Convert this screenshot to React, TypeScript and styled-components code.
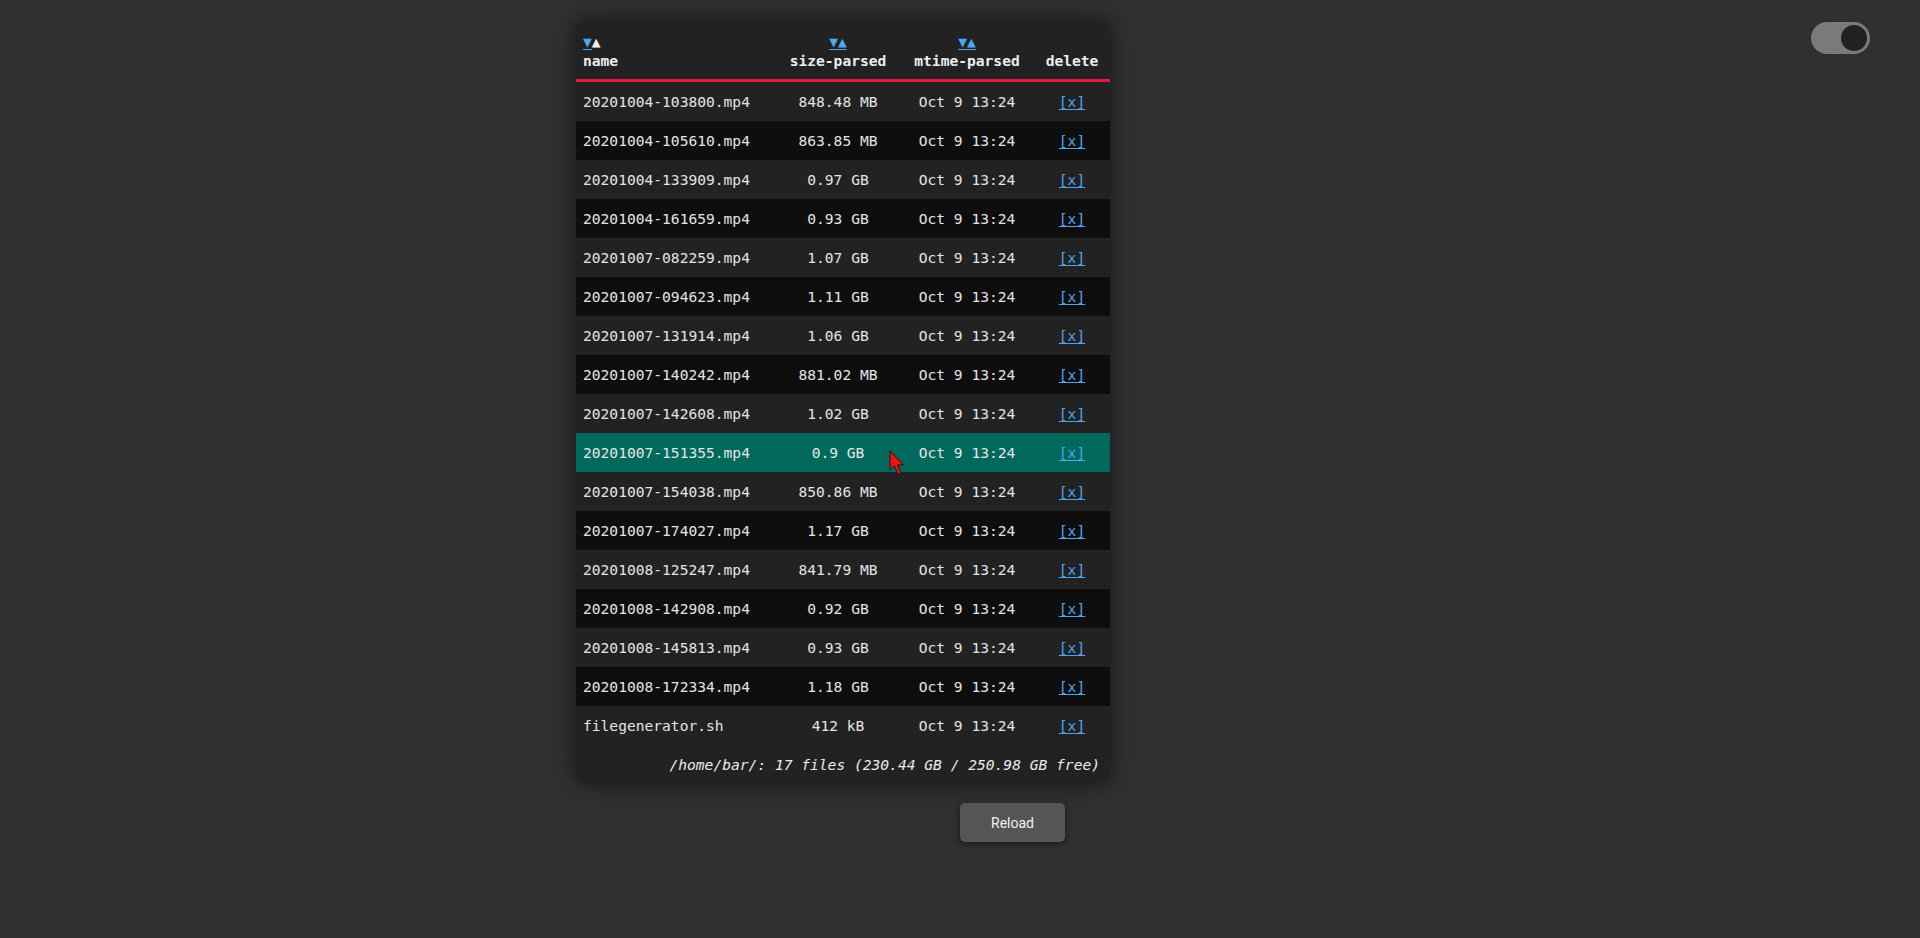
import React from "react";
import styled, { createGlobalStyle } from "styled-components";

const Global = createGlobalStyle`
  html, body { margin: 0; padding: 0; background: #303030; }
  body { font-family: "DejaVu Sans Mono", monospace; color: #e2e2e2; }
`;

const COLS = "200px 124px 134px 76px";

const Page = styled.div`
  position: relative;
  min-height: 938px;
  box-sizing: border-box;
  padding: 21px 0 0 576px;
  display: flex;
  flex-direction: column;
`;

const Panel = styled.div`
  width: 534px;
  background: #222222;
  border-radius: 10px;
  box-shadow: 0 0 22px rgba(0, 0, 0, 0.55);
  overflow: hidden;
`;

const HeadRow = styled.div`
  display: grid;
  grid-template-columns: ${COLS};
  padding: 11px 0 9px;
  border-bottom: 3px solid #e8193c;
  font-size: 14.6px;
  line-height: 19px;
  font-weight: bold;
  color: #eeeeee;
`;

const HeadCell = styled.div<{ $align: "left" | "center" }>`
  display: flex;
  flex-direction: column;
  align-items: ${(p) => (p.$align === "left" ? "flex-start" : "center")};
  padding: 0 7px;
  white-space: nowrap;
`;

const Sorts = styled.div`
  display: flex;
  font-weight: normal;
`;

const SortLink = styled.a`
  color: #4ea6f0;
  text-decoration: underline;
  text-underline-offset: 2px;
  cursor: pointer;
`;

const SortActive = styled.span`
  color: #f4eef4;
`;

const Row = styled.div<{ $dark: boolean; $hover?: boolean }>`
  display: grid;
  grid-template-columns: ${COLS};
  height: 39px;
  align-items: center;
  font-size: 14.6px;
  color: #e4e4e4;
  background: ${(p) => (p.$hover ? "#00695c" : p.$dark ? "#0e0e0e" : "#222222")};
`;

const Cell = styled.div<{ $align: "left" | "center" }>`
  text-align: ${(p) => p.$align};
  padding: 0 7px;
  white-space: nowrap;
`;

const DelLink = styled.a`
  color: #4ea6f0;
  text-decoration: underline;
  text-underline-offset: 2px;
  cursor: pointer;
`;

const Footer = styled.div`
  height: 38px;
  display: flex;
  align-items: center;
  justify-content: flex-end;
  padding-right: 10px;
  font-size: 14.6px;
  font-style: italic;
  color: #ececec;
`;

const ButtonRow = styled.div`
  display: flex;
  padding: 20px 0 0 384px;
`;

const ReloadButton = styled.button`
  width: 105px;
  height: 39px;
  border: none;
  border-radius: 5px;
  background: #555555;
  color: #f0f0f0;
  font-family: Roboto, "Liberation Sans", sans-serif;
  font-size: 14px;
  box-shadow: 0 2px 6px rgba(0, 0, 0, 0.45);
  cursor: pointer;
`;

const Toggle = styled.div`
  position: absolute;
  top: 22px;
  left: 1811px;
  width: 59px;
  height: 32px;
  border-radius: 16px;
  background: #7a7a7a;
`;

const Knob = styled.div`
  position: absolute;
  top: 3px;
  right: 3px;
  width: 26px;
  height: 26px;
  border-radius: 50%;
  background: #222222;
`;

const Cursor = styled.svg`
  position: absolute;
  left: 889px;
  top: 450px;
  pointer-events: none;
`;

const files: [string, string][] = [
  ["20201004-103800.mp4", "848.48 MB"],
  ["20201004-105610.mp4", "863.85 MB"],
  ["20201004-133909.mp4", "0.97 GB"],
  ["20201004-161659.mp4", "0.93 GB"],
  ["20201007-082259.mp4", "1.07 GB"],
  ["20201007-094623.mp4", "1.11 GB"],
  ["20201007-131914.mp4", "1.06 GB"],
  ["20201007-140242.mp4", "881.02 MB"],
  ["20201007-142608.mp4", "1.02 GB"],
  ["20201007-151355.mp4", "0.9 GB"],
  ["20201007-154038.mp4", "850.86 MB"],
  ["20201007-174027.mp4", "1.17 GB"],
  ["20201008-125247.mp4", "841.79 MB"],
  ["20201008-142908.mp4", "0.92 GB"],
  ["20201008-145813.mp4", "0.93 GB"],
  ["20201008-172334.mp4", "1.18 GB"],
  ["filegenerator.sh", "412 kB"],
];

export default function App() {
  return (
    <>
      <Global />
      <Page>
        <Panel>
          <HeadRow>
            <HeadCell $align="left">
              <Sorts>
                <SortLink>▼</SortLink>
                <SortActive>▲</SortActive>
              </Sorts>
              <span>name</span>
            </HeadCell>
            <HeadCell $align="center">
              <Sorts>
                <SortLink>▼▲</SortLink>
              </Sorts>
              <span>size-parsed</span>
            </HeadCell>
            <HeadCell $align="center">
              <Sorts>
                <SortLink>▼▲</SortLink>
              </Sorts>
              <span>mtime-parsed</span>
            </HeadCell>
            <HeadCell $align="center">
              <Sorts>&nbsp;</Sorts>
              <span>delete</span>
            </HeadCell>
          </HeadRow>
          {files.map(([name, size], i) => (
            <Row key={name} $dark={i % 2 === 1} $hover={i === 9}>
              <Cell $align="left">{name}</Cell>
              <Cell $align="center">{size}</Cell>
              <Cell $align="center">Oct 9 13:24</Cell>
              <Cell $align="center">
                <DelLink>[x]</DelLink>
              </Cell>
            </Row>
          ))}
          <Footer>/home/bar/: 17 files (230.44 GB / 250.98 GB free)</Footer>
        </Panel>
        <ButtonRow>
          <ReloadButton>Reload</ReloadButton>
        </ButtonRow>
        <Toggle>
          <Knob />
        </Toggle>
        <Cursor width="16" height="26" viewBox="0 0 16 26">
          <path
            d="M1 1 L1 20 L5.4 15.8 L8.8 24 L11.8 22.7 L8.5 14.8 L14.6 14.8 Z"
            fill="#e5151b"
            stroke="#3a0a0a"
            strokeWidth="1"
            strokeLinejoin="round"
          />
        </Cursor>
      </Page>
    </>
  );
}
